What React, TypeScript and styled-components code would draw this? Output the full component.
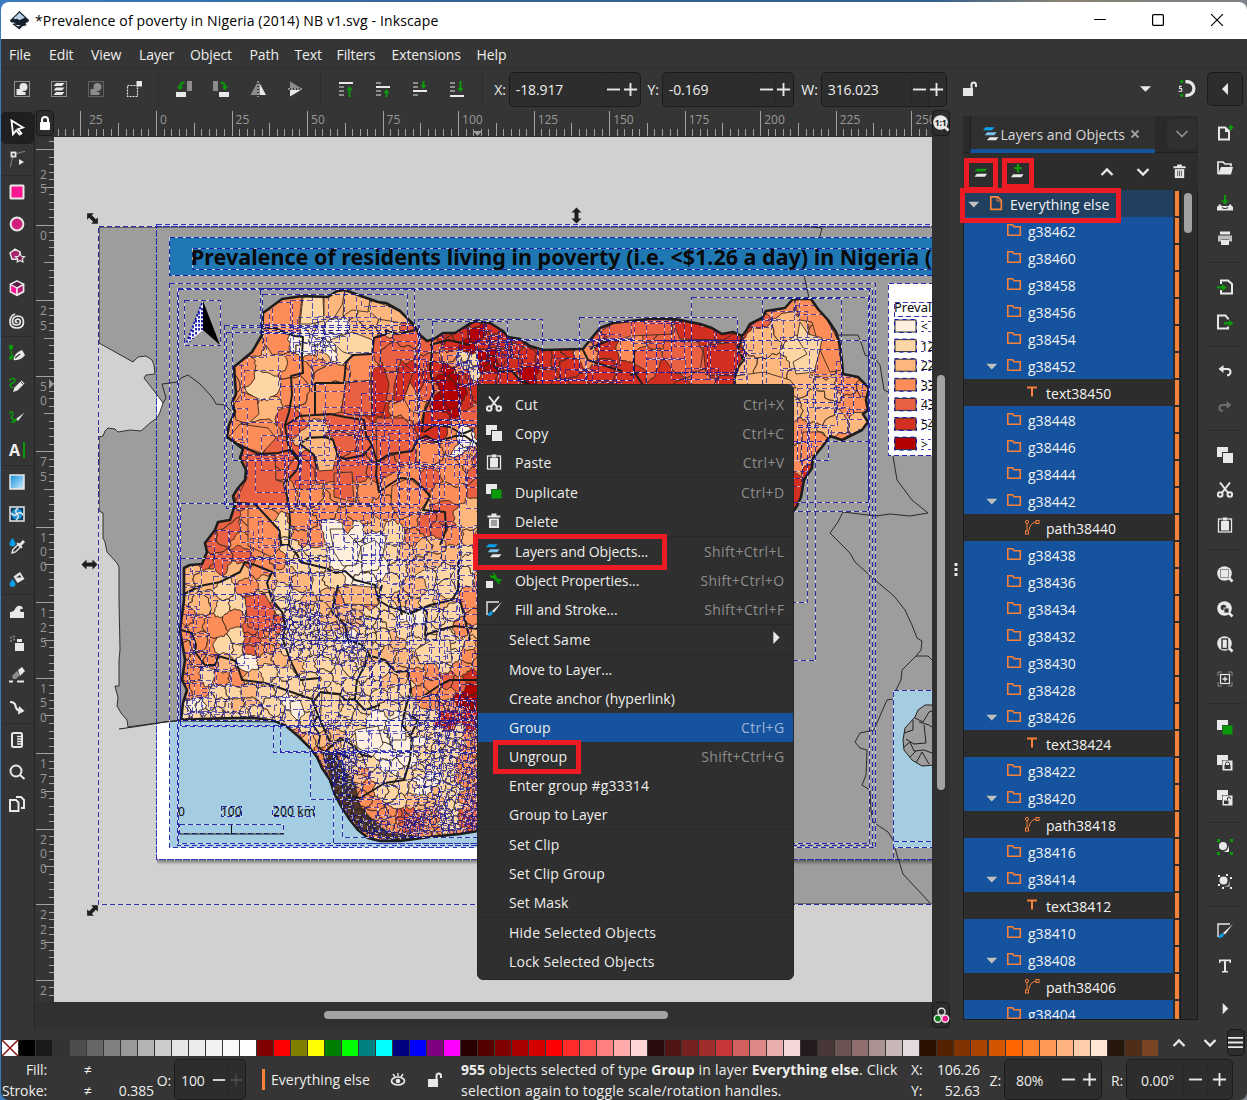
import React from 'react';
import styled, { createGlobalStyle, css } from 'styled-components';

const Global = createGlobalStyle`
  * { box-sizing: border-box; }
  body { margin: 0; width: 1247px; height: 1100px; overflow: hidden; background: #353535; }
`;

const W = '#e8e8e8';
const G = '#8c8c8c';
const GR = '#0a9a0a';
const OR = '#f5813a';
const BL = '#15539e';

const Window = styled.div`
  position: relative;
  width: 1247px;
  height: 1100px;
  overflow: hidden;
  display: flex;
  flex-direction: column;
  padding: 2px 0 0 1px;
  background: linear-gradient(90deg, #3a7cc0, #35618f 40%, #34608f 75%, #8a8272 85%, #7e8288);
  color: #eeeeec;
  font: 14px 'Open Sans', 'Noto Sans', sans-serif;
  letter-spacing: -0.1px;
  white-space: nowrap;
`;
const TitleBar = styled.div`
  height: 37px;
  flex: none;
  display: flex;
  align-items: center;
  background: #fff;
  color: #000;
  border-radius: 8px 8px 0 0;
  padding: 0 1px 0 9px;
`;
const Title = styled.span`
  flex: 1;
  margin-left: 6px;
  letter-spacing: 0.14px;
`;
const WinBtn = styled.span`
  width: 58.5px;
  display: flex;
  justify-content: center;
  padding-bottom: 1px;
`;
const MenuBar = styled.div`
  height: 29px;
  flex: none;
  display: flex;
  align-items: center;
  background: #353535;
  border-bottom: 1px solid #2d2d2d;
  padding: 3px 0 0 8px;
`;
const MenuName = styled.span<{ $w: number }>`
  width: ${p => p.$w}px;
`;
const ToolRow = styled.div`
  height: 42px;
  flex: none;
  display: flex;
  align-items: center;
  background: #353535;
  padding: 0 0 0 2.5px;
`;
const TopBtn = styled.span<{ $w?: number; $boxed?: boolean }>`
  width: ${p => p.$w ?? 37.2}px;
  height: 34px;
  flex: none;
  display: flex;
  align-items: center;
  justify-content: center;
  margin-bottom: 1px;
  ${p => p.$boxed && css`
    margin-right: 4px;
    background: #2d2d2d;
    border: 1px solid #1b1b1b;
    border-radius: 5px;
  `}
`;
const Spacer = styled.span`
  flex: 1;
`;
const VSep = styled.span`
  width: 1px;
  height: 34px;
  margin: 0 6px;
  background: #2d2d2d;
  flex: none;
`;
const SpinLabel = styled.span<{ $w: number }>`
  width: ${p => p.$w}px;
  text-align: right;
  padding: 1px 3px 0 0;
  flex: none;
`;
const SpinBox = styled.span<{ $w: number; $h?: number; $cell?: number; $pad?: number; $end?: number }>`
  width: ${p => p.$w}px;
  height: ${p => p.$h ?? 35}px;
  flex: none;
  display: flex;
  align-items: stretch;
  background: #2d2d2d;
  border: 1px solid #1b1b1b;
  border-radius: 5px;
  padding-right: ${p => p.$end ?? 1}px;
  & > b { flex: 1; font-weight: 400; padding: 1px 0 0 ${p => p.$pad ?? 6}px; align-self: center; }
  & > i { width: ${p => p.$cell ?? 17}px; display: flex; align-items: center; justify-content: center; border-left: 1px solid #292929; }
`;
const Main = styled.div`
  height: 919px;
  flex: none;
  display: flex;
  background: #353535;
`;
const LeftBar = styled.div`
  width: 34px;
  flex: none;
  padding-top: 1.5px;
  border-right: 1px solid #242424;
  margin-right: 1px;
`;
const ToolBtn = styled.div<{ $on?: boolean; $line?: boolean }>`
  height: 32.25px;
  display: flex;
  align-items: center;
  justify-content: center;
  padding-right: 1px;
  border-bottom: 1px solid ${p => (p.$line ? '#2b2b2b' : 'transparent')};
  ${p => p.$on && css`background: #1f1f1f; border-radius: 5px;`}
`;
const Frame = styled.div`
  width: 914px;
  flex: none;
  background: #303030;
`;
const FrameRow = styled.div<{ $h: number }>`
  height: ${p => p.$h}px;
  display: flex;
`;
const Corner = styled.div<{ $h?: number }>`
  width: 18px;
  height: ${p => p.$h ?? 26}px;
  flex: none;
  display: flex;
  align-items: center;
  justify-content: center;
  background: #2d2d2d;
  border: 1px solid #181818;
  border-radius: 5px;
`;
const VScroll = styled.div`
  width: 18px;
  padding: 238px 5px 0 5px;
`;
const Thumb = styled.div<{ $w: number; $h: number }>`
  width: ${p => p.$w}px;
  height: ${p => p.$h}px;
  border-radius: 5px;
  background: #a3a2a0;
`;
const HScroll = styled.div`
  width: 896px;
  padding: 9px 0 0 288px;
`;
const Splitter = styled.div`
  width: 13px;
  flex: none;
  display: flex;
  align-items: center;
  justify-content: center;
  padding-right: 1px;
`;
const Panel = styled.div`
  width: 235px;
  height: 904px;
  margin-top: 6px;
  flex: none;
  display: flex;
  flex-direction: column;
  background: #2d2d2d;
`;
const Tabs = styled.div`
  height: 37px;
  flex: none;
  display: flex;
  background: #2a2a2a;
  border-bottom: 1px solid #1f1f1f;
  padding-left: 7px;
`;
const Tab = styled.div`
  width: 185px;
  height: 37px;
  display: flex;
  align-items: center;
  gap: 2px;
  padding-left: 11.5px;
  background: #303030;
  border-left: 1px solid #1f1f1f;
  border-bottom: 4px solid ${BL};
  color: #d8d8d8;
  letter-spacing: 0.04px;
  padding-top: 3px;
`;
const TabMenu = styled.div`
  width: 30px;
  height: 30px;
  margin: 3px 0 0 12px;
  display: flex;
  align-items: center;
  justify-content: center;
  border-radius: 5px;
  background: #303030;
`;
const PanelTools = styled.div`
  height: 37px;
  flex: none;
  display: flex;
  align-items: center;
`;
const PBtn = styled.span<{ $w: number }>`
  width: ${p => p.$w}px;
  display: flex;
  justify-content: center;
`;
const ListArea = styled.div`
  flex: 1;
  min-height: 0;
  display: flex;
  border: 1px solid #1b1b1b;
  border-width: 0 1px 1px 1px;
`;
const List = styled.div`
  width: 217px;
  overflow: hidden;
  border-right: 1px solid #1b1b1b;
`;
const Row = styled.div<{ $kind: string }>`
  height: 27px;
  display: flex;
  align-items: center;
  color: #f4f4f4;
  letter-spacing: ${p => (p.$kind === 'root' ? 0.08 : 0.02)}px;
  & > div {
    width: 209px;
    height: 27px;
    display: flex;
    align-items: center;
    background: ${p => (p.$kind === 'root' ? '#21405f' : p.$kind === 'g' ? BL : '#2d2d2d')};
  }
  & > u { width: 4px; height: 25px; margin-left: 2px; background: ${OR}; }
`;
const Slot = styled.span<{ $w: number; $lift?: number }>`
  width: ${p => p.$w}px;
  display: flex;
  justify-content: flex-end;
  padding-bottom: ${p => p.$lift ?? 2}px;
  flex: none;
`;
const RowName = styled.span<{ $gap: number }>`
  margin-left: ${p => p.$gap}px;
  padding-top: 1px;
`;
const ListScroll = styled.div`
  padding: 3px 0 0 3px;
`;
const RightBar = styled.div`
  width: 48px;
  flex: none;
  padding: 5.4px 0 0 6px;
`;
const CmdBtn = styled.div<{ $h?: number }>`
  height: ${p => p.$h ?? 35}px;
  display: flex;
  align-items: center;
  justify-content: center;
`;
const CmdSep = styled.div`
  height: 1px;
  margin: 6.5px 2px;
  background: #2c2c2c;
`;
const PaletteRow = styled.div`
  height: 27px;
  flex: none;
  display: flex;
  align-items: flex-end;
  background: #353535;
  padding-left: 0.6px;
`;
const Swatch = styled.span<{ $c: string }>`
  width: 16px;
  height: 16px;
  margin-right: 1.02px;
  background: ${p => p.$c};
  flex: none;
`;
const NavBtn = styled.span<{ $w: number }>`
  width: ${p => p.$w}px;
  height: 27px;
  display: flex;
  align-items: center;
  justify-content: center;
`;
const Status = styled.div`
  height: 44px;
  flex: none;
  display: flex;
  align-items: center;
  background: #353535;
  padding-top: 3px;
  border-radius: 0 0 8px 8px;
`;
const Stack = styled.div<{ $w: number; $right?: boolean; $gap?: number; $ls?: number }>`
  width: ${p => p.$w}px;
  flex: none;
  display: flex;
  flex-direction: column;
  line-height: 21px;
  text-align: ${p => (p.$right ? 'right' : 'left')};
  padding-left: ${p => p.$gap ?? 0}px;
  letter-spacing: ${p => p.$ls ?? -0.1}px;
  & b { font-weight: 700; letter-spacing: 0.05px; }
`;
const LayerMark = styled.span`
  width: 3px;
  height: 21px;
  margin: 0 6px 0 16px;
  background: ${OR};
  flex: none;
`;
const LayerName = styled.span`
  width: 100px;
  flex: none;
  letter-spacing: 0.05px;
`;
const Cell = styled.span<{ $w: number }>`
  width: ${p => p.$w}px;
  flex: none;
  display: flex;
  justify-content: center;
`;

const Popup = styled.div`
  position: absolute;
  left: 477px;
  top: 384px;
  width: 317px;
  height: 596px;
  padding: 5px 0;
  background: #2f2f2f;
  border: 1px solid #262626;
  border-radius: 0 6px 6px 6px;
`;
const Item = styled.div<{ $on?: boolean; $icon?: boolean; $line?: boolean; $ls: number }>`
  height: ${p => (p.$line ? 30 : 29)}px;
  display: flex;
  align-items: center;
  padding: 0 8.5px 1px ${p => (p.$icon ? 8 : 31)}px;
  background: ${p => (p.$on ? BL : 'transparent')};
  border-bottom: ${p => (p.$line ? '1px solid #282828' : 'none')};
  letter-spacing: ${p => p.$ls}px;
  & > svg { margin-right: 13px; }
  & > em { margin-left: auto; font-style: normal; letter-spacing: 0.38px; color: ${p => (p.$on ? '#9db6d6' : '#8e8e8c')}; }
`;
const Mark = styled.div<{ $x: number; $y: number; $w: number; $h: number }>`
  position: absolute;
  left: ${p => p.$x}px;
  top: ${p => p.$y}px;
  width: ${p => p.$w}px;
  height: ${p => p.$h}px;
  border: 5px solid #ed1c24;
`;

/* ---------- icons ---------- */
const LensText = styled.text`
  font: 700 8.5px 'Open Sans', sans-serif;
  letter-spacing: -0.2px;
  fill: #1a1a1a;
`;
const dots = (c: string) => <rect x=".5" y=".5" width="15" height="15" fill="none" stroke={c} strokeDasharray="1 1" />;
const lens = <><circle cx="7.5" cy="7.5" r="7.3" fill={W} /><path d="M12 12l3.5 3.5" stroke={W} strokeWidth="2.6" /></>;
const copyBack = <path d="M0 0h11v5H5v5H0z" fill={W} />;
const scissors = <g fill="none" stroke={W} strokeWidth="2"><circle cx="3.2" cy="12.5" r="2.3" /><circle cx="12.8" cy="12.5" r="2.3" /><path d="M3 .5l7.8 10M13 .5L5.2 10.5" /></g>;
const para = (x: number, y: number, w: number, c: string) => <path d={`M${x + 2.5} ${y}h${w - 2.5}l-2.5 3.1h-${w - 2.5}z`} fill={c} />;
const arrowUp = (x: number, y: number, h: number) => <path d={`M${x} ${y}l-3 4h2v${h - 4}h2v-${h - 4}h2z`} fill={GR} />;
const arrowDn = (x: number, y: number, h: number) => <path d={`M${x} ${y + h}l-3-4h2v-${h - 4}h2v${h - 4}h2z`} fill={GR} />;
const lines = (ys: number[]) => ys.map(y => <rect key={y} x="1" y={y} width="5" height="2" fill={G} />);

const ICONS: Record<string, React.ReactNode> = {
  selAll: <>{dots(W)}<circle cx="9.5" cy="6" r="4" fill={W} /><path d="M2.5 8h4l3 3h2v3h-9z" fill={W} /></>,
  selLayers: <>{dots(W)}{para(2.5, 2, 11, W)}{para(2.5, 6.5, 11, W)}{para(2.5, 11, 11, W)}</>,
  desel: <>{dots(G)}<circle cx="9.5" cy="6" r="4" fill={G} /><path d="M2.5 8h4l3 3h2v3h-9z" fill={G} /></>,
  resize: <><rect x="1.5" y="4.5" width="10" height="11" fill="none" stroke={W} strokeWidth="1.2" strokeDasharray="2 1" /><rect x="10.5" y="0" width="5.5" height="5.5" fill={W} /></>,
  rotL: <><rect x="11" y="0" width="5" height="10" fill={G} /><rect x="0" y="11" width="10" height="5" fill={W} /><path d="M8.5 1.5C5 1.5 4 3 4 6" fill="none" stroke={GR} strokeWidth="2" /><path d="M.8 5.5h6.4L4 9.3z" fill={GR} /></>,
  rotR: <><rect x="0" y="0" width="5" height="10" fill={G} /><rect x="6" y="11" width="10" height="5" fill={W} /><path d="M7.5 1.5C11 1.5 12 3 12 6" fill="none" stroke={GR} strokeWidth="2" /><path d="M8.8 5.5h6.4L12 9.3z" fill={GR} /></>,
  flipH: <><path d="M7 2v12H.5z" fill={G} /><path d="M9.500 2v12H16z" fill={W} /><path d="M8 0v16" stroke={W} strokeDasharray="2 1" /></>,
  flipV: <><path d="M3 7V.5L14 7z" fill={G} /><path d="M3 9v6.5L14 9z" fill={W} /><path d="M1 8h15" stroke={W} strokeDasharray="2 1" /></>,
  top: <><rect x="1" y="1" width="14" height="2" fill={W} />{lines([5, 9, 13])}{arrowUp(11.5, 5, 11)}</>,
  raise: <>{lines([1, 9, 13])}<rect x="1" y="5" width="14" height="2" fill={W} />{arrowUp(11.5, 8, 8)}</>,
  lower: <>{lines([1, 5, 13])}<rect x="1" y="9" width="14" height="2" fill={W} />{arrowDn(11.5, 0, 8)}</>,
  bottom: <>{lines([1, 5, 9])}<rect x="1" y="14" width="14" height="2" fill={W} />{arrowDn(11.5, 0, 11)}</>,
  unlock: <><rect x="1" y="7" width="10" height="8" fill={W} /><path d="M9.5 7V4q0-2.5 2.2-2.5T14 4v2" fill="none" stroke={W} strokeWidth="2" /></>,
  lock: <><rect x="3" y="7" width="10" height="8" rx="1" fill="#fff" /><path d="M5 8V5q0-3 3-3t3 3v3" fill="none" stroke="#fff" strokeWidth="2" /></>,
  down: <path d="M2 5.500h12l-6 6z" fill={W} />,
  snap: <><path d="M7 1.5h1.500a6.500 6.500 0 0 1 0 13H7" fill="none" stroke={W} strokeWidth="3" /><circle cx="3.500" cy="1.500" r="1.600" fill={GR} /><circle cx="3.500" cy="14.500" r="1.600" fill={GR} /><path d="M3.500 6H1.500v2h2v2.500H.5" fill="none" stroke={W} /></>,
  left: <path d="M11 2v12L5 8z" fill={W} />,
  right: <path d="M5 2v12l6-6z" fill={W} />,
  cursor: <path d="M2.5 1.5l11.5 7-5 1.6 3.4 4.2-1.8 1.3-3.4-4.2-3.2 3.8z" fill="none" stroke="#fff" strokeWidth="1.800" />,
  node: <><path d="M4 6q-2 4-2.500 10M7 3q4-2 9-2.500" fill="none" stroke={G} /><rect x="2.500" y="1.500" width="4" height="4" fill="#353535" stroke={W} strokeWidth="1.800" /><path d="M10 8l5 3-5 3z" fill={W} /></>,
  rect: <rect x="1.5" y="1.5" width="13" height="13" rx=".5" fill="#ff1493" stroke={W} strokeWidth="2" />,
  ellipse: <circle cx="8" cy="8" r="6.4" fill="#d0207c" stroke={W} strokeWidth="2" />,
  star: <><path d="M6 1.2l5.2 3-1.2 7H3L1 5z" fill="#a8246c" stroke={W} strokeWidth="1.500" /><path d="M11 5.500l1.400 2.800 3.100.3-2.200 2.200.7 3.200-3-1.500-2.800 1.500.5-3.200-2.200-2.200 3.100-.3z" fill="#7c1a50" stroke={W} strokeWidth="1.200" /></>,
  cube: <><path d="M8 .8l6.500 3.500v7.500L8 15.400 1.500 11.800V4.300z" fill="#5a1a40" stroke={W} strokeWidth="1.500" /><path d="M1.500 4.500L8 8v7L1.500 11.800z" fill="#ff1493" stroke={W} strokeWidth="1.300" /><path d="M14.500 4.500L8 8v7l6.500-3.500z" fill="#b81a70" stroke={W} strokeWidth="1.500" /></>,
  spiral: <path d="M8.500 9Q7 10 6.500 8.500T8.500 6Q11.500 6 11.300 9T7.500 12Q3.500 12 3.500 8T8.500 3Q14.500 3 14.500 9T8 15Q1 15 1 8.500 1 3 6 1" fill="none" stroke={W} strokeWidth="1.700" />,
  pen: <><path d="M2 2q-1 9 5 12" fill="none" stroke={GR} strokeWidth="1.300" /><rect x="0" y="0" width="4" height="4" fill={GR} /><rect x="0" y="11" width="3.500" height="3.500" fill={GR} /><path d="M4.500 15Q5 8 13 5l3 5q-4 6-11.500 5z" fill={W} /><path d="M6 13l5-4" stroke="#353535" strokeWidth="1.300" /></>,
  pencil: <><path d="M1 4Q1 1 4 1.500T6 4 2 7t2 4" fill="none" stroke={GR} strokeWidth="1.500" /><path d="M4 15l1.500-4.500 7-7 3 3-7 7z" fill={W} /><path d="M11.500 4.500l3 3" stroke="#353535" /></>,
  brush: <><path d="M1 5Q1 2 3 3T3 7 5 10" fill="none" stroke={GR} strokeWidth="1.500" /><path d="M15.500 3.500L9 12l-2-2z" fill={W} /><path d="M8 10.500Q7 14.500 1 14q2-1 3-3t4-.5z" fill={GR} /></>,
  gradient: <rect x="1" y="1" width="14" height="14" fill="url(#gradBlue)" stroke={W} strokeWidth="1.500" />,
  mesh: <><rect x="1" y="1" width="14" height="14" fill="#0d3c5c" stroke={W} strokeWidth="1.500" /><circle cx="8" cy="8" r="5.500" fill="#1d93d8" /><path d="M8 8Q5 5 9 2M8 8q3-3 6 1M8 8q3 3-1 6M8 8Q5 11 2 7" fill="none" stroke={W} strokeWidth="1.500" /></>,
  dropper: <><path d="M3.500 0q3 4 3 5.500a2.800 2.800 0 0 1-6 0Q.5 4 3.500 0z" fill="#0d9be6" /><path d="M3 15l1-3.500 5-5 2.500 2.500-5 5z" fill="none" stroke={W} strokeWidth="1.400" /><path d="M8.500 4.500l2 1L14 2l2 2-3.500 3.500 1 2-1 1-5-5z" fill={W} /></>,
  bucket: <><path d="M4.500 5.500L11 1l4.500 7L8.500 12z" fill={W} /><path d="M7 6.500l4-2.500 1.500 2.500z" fill="#353535" /><path d="M3.500 8q3 3.500 3 5a2.800 2.800 0 0 1-6 0Q.5 12 3.500 8z" fill="#0d9be6" /></>,
  tweak: <path d="M1 15V9q4 0 5-3 2-4 6-3 2 1 2 3-3-1-3 2 0 1 4 1v6z" fill={W} />,
  spray: <><rect x="6" y="8" width="9" height="8" fill={W} /><path d="M8 7V4h5v3z" fill={W} /><g fill={G}><circle cx="2" cy="2.500" r="1" /><circle cx="5" cy="1.500" r="1" /><circle cx="2" cy="6" r="1" /><circle cx="5" cy="4.500" r="1" /></g></>,
  eraser: <><path d="M9 3l4-3 3 4-5 5z" fill={W} /><path d="M3 9l5-5 3 4-4 4H4z" fill={G} /><path d="M0 14.500h4M8 14.500h7" stroke={W} strokeWidth="2" /></>,
  connector: <><path d="M1 2q5 0 5.500 4T12 11" fill="none" stroke={W} strokeWidth="2.200" /><path d="M10 6l5.500 5-6.500 3.500z" fill={W} /></>,
  measure: <><rect x="3" y="1" width="10" height="14" rx="1.500" fill="none" stroke={W} strokeWidth="2" /><path d="M8 4.500h4M8 7h4M8 9.500h4M8 12h4" stroke={W} strokeWidth="1.300" /></>,
  zoom: <><circle cx="7" cy="7" r="5.500" fill="none" stroke={W} strokeWidth="2" /><path d="M11 11l4.500 4" stroke={W} strokeWidth="2" /></>,
  pages: <><path d="M1 4h6l2.500 2.500V15H1z" fill="none" stroke={W} strokeWidth="2" /><path d="M7 1h5l3 3v8h-3" fill="none" stroke={W} strokeWidth="2" /></>,
  newDoc: <><path d="M2 2.500h6L12 6v8.500H2z" fill="none" stroke={W} strokeWidth="2" /><path d="M8 2v5h4z" fill={W} /><path d="M14 0v5M11.500 2.500h5" stroke={GR} strokeWidth="2" /></>,
  open: <><path d="M1 14V2h5l2 2h6v2.500" fill="none" stroke={W} strokeWidth="1.700" /><path d="M4 7h12l-2 7.500H1z" fill={W} /></>,
  save: <><path d="M3 9L0 12v3.500h16V12l-3-3-1.500 2h-7z" fill={W} /><path d="M5 12.500q3 2 6 0" fill="none" stroke="#353535" strokeWidth="1.200" /><path d="M8 9.500L4 5.500h3V0h2v5.500h3z" fill={GR} /></>,
  print: <><rect x="3" y="1.500" width="10" height="3" fill={W} /><path d="M1 5.500h14v6h-3V9.500H4v2H1z" fill="#c0c0c0" /><rect x="4" y="10" width="8" height="5" fill={W} /></>,
  imp: <><path d="M4 5V1.500h7L15 5v9.500H4V11" fill="none" stroke={W} strokeWidth="2" /><path d="M0 7.200h5V5l5 3.500L5 12V9.500H0z" fill={GR} /></>,
  exp: <><path d="M11 5.500V4.500L8.500 1.500H1v13h10v-2" fill="none" stroke={W} strokeWidth="2" /><path d="M7 8h5V6l4.500 3.300L12 12.500v-2H7z" fill={GR} /></>,
  undo: <><path d="M5 6h5.500q3 0 3 3T10 12.500" fill="none" stroke={W} strokeWidth="2" /><path d="M1.500 6L6.500 2v8z" fill={W} /></>,
  redo: <><path d="M11 7H6q-3.500 0-3.500 3T6 13" fill="none" stroke="#6e6e6e" strokeWidth="2" /><path d="M14.500 7L9.500 3v8z" fill="#6e6e6e" /></>,
  copy: <>{copyBack}<rect x="6" y="6" width="10" height="10" fill={W} /></>,
  dup: <>{copyBack}<rect x="5.500" y="5.500" width="10" height="9" fill={GR} /></>,
  cut: scissors,
  paste: <><rect x="1.500" y="2" width="13" height="13" fill="none" stroke={W} strokeWidth="1.300" /><rect x="5" y="0" width="6" height="4" fill="#353535" /><rect x="4" y="4" width="8" height="9.500" fill={W} /><rect x="5.500" y=".5" width="5" height="3" fill={W} /></>,
  zSel: <>{lens}<rect x="3.500" y="3.500" width="8" height="8" fill="none" stroke="#353535" strokeDasharray="1 1" /></>,
  zDraw: <>{lens}<circle cx="6.500" cy="6.500" r="2.800" fill="#353535" /><rect x="7" y="7" width="5" height="5" fill="#353535" stroke={W} strokeWidth=".8" /></>,
  zPage: <>{lens}<rect x="5" y="3" width="5.500" height="9.500" fill="none" stroke="#353535" strokeWidth="1.400" /></>,
  zOne: <>{lens}<LensText x="1.800" y="10.600">1:1</LensText></>,
  zCenter: <><path d="M1 5V1h4M11 1h4v4M15 11v4h-4M5 15H1v-4" fill="none" stroke={G} /><rect x="3.500" y="3.500" width="9" height="9" fill="none" stroke={W} strokeWidth="1.200" /><path d="M8 5.500v5M5.500 8h5" stroke={W} strokeWidth="1.300" /></>,
  clone: <>{copyBack}<rect x="5.500" y="5.500" width="10" height="10" fill={W} /><rect x="7.500" y="10" width="6" height="4" fill="#353535" /><path d="M8.500 10V8.500q0-1.500 2-1.500t2 1.500V10" fill="none" stroke="#353535" /></>,
  unlink: <>{copyBack}<rect x="5.500" y="5.500" width="10" height="10" fill={W} /><rect x="7" y="10.500" width="4.500" height="3.500" fill="#353535" /><path d="M10.500 10V8q0-1 1.500-1t1.500 2" fill="none" stroke="#353535" /></>,
  group: <><g fill={GR}><rect width="3" height="3" /><rect x="13" width="3" height="3" /><rect y="13" width="3" height="3" /><rect x="13" y="13" width="3" height="3" /></g><circle cx="6" cy="7" r="4" fill={W} /><path d="M12 6v7H6q5-1 6-7z" fill={W} /></>,
  ungroup: <><g fill={W}><rect x="1" y="1" width="2" height="2" /><rect x="9" y="0" width="2" height="2" /><rect x="13" y="3" width="2" height="2" /><rect x="1" y="10" width="2" height="2" /><rect x="5" y="13" width="2" height="2" /><rect x="13" y="13" width="2" height="2" /></g><circle cx="6.500" cy="6.500" r="4" fill={W} /><path d="M13 6v7H6q6-1 7-7z" fill={G} /></>,
  fill: <><path d="M1 14V1h12" fill="none" stroke={W} strokeWidth="1.400" /><path d="M16 1L8 11.500 6 10z" fill={W} /><path d="M7 11q0 3.500-5.500 4.500 0-4 4-5.500z" fill="#0d9be6" /></>,
  text: <path d="M2 1.500h12v3.500h-1.200l-.5-1.700H9v9.700h2V14.500H5V13h2V3.300H3.700L3.200 5H2z" fill={W} />,
  trash: <><path d="M1.500 2.500h13v2h-13zM5.500.5h5v2h-5z" fill={W} /><path d="M3 5.500h10V15H3z" fill={W} /><path d="M6 7v6M8 7v6M10 7v6" stroke="#555" /></>,
  layers: <>{para(0, 1.2, 11.500, '#0da2f0')}{para(1.700, 6.200, 12, '#7cc4ec')}{para(4, 11.200, 11.500, W)}</>,
  props: <><rect x="0" y="9" width="7" height="7" fill={W} /><path d="M5 1q4-1 5 3l2 3q3-1 4 2l-2 0-1 2 2 1q-3 1-4-2l-4-4Q3 6 4 3l3 1 1-2z" fill={GR} /></>,
  addLayer: <>{para(0.5, 5, 13.500, GR)}{para(0.5, 10.500, 13.500, W)}</>,
  plusLayer: <><path d="M8.500 0v9M4.500 4.500h8" stroke={GR} strokeWidth="2.400" />{para(1, 11, 13.500, W)}</>,
  up: <path d="M2.500 11L8 5.500l5.500 5.500" fill="none" stroke={W} strokeWidth="2.300" />,
  chev: <path d="M2.500 5L8 10.500 13.500 5" fill="none" stroke={W} strokeWidth="2.300" />,
  chevDim: <path d="M2.500 5L8 10.500 13.500 5" fill="none" stroke="#929292" strokeWidth="1.700" />,
  close: <path d="M4.500 4.500l7 7M11.500 4.500l-7 7" stroke="#a0a0a0" strokeWidth="1.800" />,
  folder: <path d="M1.800 2.800h4.700l1.500 2h6.300v8.400H1.800z" fill="none" stroke={OR} strokeWidth="1.600" />,
  file: <><path d="M2.800 1.800h7l3.500 3.500v9H2.800z" fill="none" stroke={OR} strokeWidth="1.700" /><path d="M9 2v4h4" fill="none" stroke={OR} /></>,
  tObj: <path d="M3 3.500h10M8 3.500v9" stroke={OR} strokeWidth="2" />,
  pObj: <g fill="none" stroke={OR}><path d="M3 5v7M5 11q1-7 7-8" /><circle cx="3" cy="3" r="1.600" /><rect x="1.500" y="12" width="3" height="3" /><rect x="12" y="1.500" width="3" height="3" /></g>,
  tri: <path d="M1.500 5.500h12.500L7.750 12z" fill="#c0c0c0" />,
  minus: <path d="M1 8h14" stroke={W} strokeWidth="2" />,
  plus: <path d="M1 8h14M8 1v14" stroke={W} strokeWidth="2" />,
  plusDim: <path d="M1.500 8h13M8 1.500v13" stroke="#555" strokeWidth="1.500" />,
  burger: <path d="M0 3h16M0 8h16M0 13h16" stroke={W} strokeWidth="1.900" />,
  eye: <><ellipse cx="8" cy="9" rx="6.500" ry="4" fill="none" stroke={W} strokeWidth="1.700" /><circle cx="8" cy="9" r="2.300" fill={W} /><path d="M3 2l2 3M8 1v3M13 2l-2 3" stroke={W} strokeWidth="1.400" /></>,
  cms: <g strokeWidth="1.300" stroke={W}><circle cx="8" cy="4.500" r="3.300" fill="none" /><circle cx="4.500" cy="11" r="3.300" fill="#0a7a1a" /><circle cx="11.500" cy="11" r="3.300" fill="#f0148c" /></g>,
  ink: <><path d="M8 0l8 7.500q0 2-3 2.500l1 2-4 1-2 2.500L6 14l-4-3 3-1-4-.5q-2-1 0-2.500z" fill="#16202c" /><path d="M8 1.500l4.500 4.200-2.500 1-2 1-2-1.200-2 .5-1-.8z" fill="#b9d2ea" /><path d="M4 11.500l5 .5-2 1z" fill="#dce8f4" /></>,
};
const Glyph = styled.svg`
  flex: none;
  overflow: visible;
`;
const Ico = ({ n, s = 16 }: { n: string; s?: number }) => <Glyph width={s} height={s} viewBox="0 0 16 16">{ICONS[n]}</Glyph>;

/* ---------- map ---------- */
type P = [number, number];
const OUTLINE: P[] = [[263, 313], [282, 299], [302, 296], [328, 297], [337, 291], [345, 290], [358, 295], [378, 302], [386, 303], [400, 311], [413, 324], [420, 335], [427, 341], [434, 339], [443, 333], [455, 333], [466, 326], [475, 321], [490, 323], [503, 331], [508, 337], [520, 339], [530, 346], [543, 350], [583, 349], [590, 340], [600, 328], [613, 323], [630, 321], [650, 319], [675, 319], [690, 322], [700, 324], [712, 328], [722, 334], [733, 332], [742, 336], [746, 331], [750, 324], [762, 318], [766, 311], [785, 308], [793, 299], [811, 299], [818, 309], [828, 320], [836, 332], [840, 345], [842, 362], [843, 374], [858, 377], [869, 388], [866, 400], [868, 410], [863, 414], [868, 422], [862, 430], [842, 440], [830, 436], [822, 447], [813, 458], [812, 468], [804, 480], [801, 497], [797, 506], [760, 560], [700, 600], [640, 700], [560, 800], [478, 831], [460, 834], [430, 837], [400, 841], [380, 841], [368, 838], [358, 830], [350, 820], [341, 806], [335, 795], [330, 780], [322, 768], [317, 757], [310, 748], [298, 736], [286, 726], [275, 721], [255, 718], [235, 718], [200, 719], [181, 720], [183, 703], [187, 690], [182, 680], [185, 660], [180, 630], [184, 600], [184, 568], [190, 565], [202, 564], [207, 552], [205, 543], [215, 530], [218, 522], [230, 520], [235, 505], [233, 496], [238, 488], [245, 480], [246, 470], [240, 458], [243, 449], [227, 437], [229, 425], [235, 412], [232, 403], [236, 394], [234, 367], [252, 352], [262, 335]];
// one digit per 20px square, starting at (180, 290); digits index into RAMP
const MID = '4444444444444';
const SHADES = [
  '....331222222555555544444555' + '4333333',
  '....33112222255555554444555544' + '33333',
  '...33300124445655555443445554221333',
  '..332132334443165555355444553211333',
  '..321333454556555655555454442222233',
  '..3323334543465' + '5555555555555' + '2222233',
  '..3324444444554' + '5555555555555' + '2222222',
  '..3334224444430' + MID + '3332222',
  '...443424444333' + MID + '3333333',
  '..4444344433433' + MID + '3555555',
  '...443333332334' + MID + '4455555',
  '.44343333233442',
  '.44331300013232',
  '444431100012221',
  '222322110012113',
  '221421223312123',
  '333441122110113',
  '331431110121112',
  '332022111222213',
  '313211111123345',
  '011210111111336',
  '111111111001155',
  '......221000113',
  '......131100113',
  '......332311013',
  '......333312213',
  '......333334314',
  '......333333333',
];
const RAMP = ['#fef0dc', '#fdd6a5', '#fdb77d', '#fc8d59', '#ea6043', '#d33022', '#b30000'];
// large districts drawn over the fine mesh: [ramp index, outline]
const LARGE: [number, string][] = [
  [3, 'M263 313L282 299 302 297 299 322 301 334 286 333 275 328 263 328Z'],
  [1, 'M303 297L323 297 324 321 310 324 300 324Z'],
  [2, 'M324 297L337 291 345 290 342 305 334 318 324 320Z'],
  [2, 'M345 290L370 299 368 312 352 310 343 316Z'],
  [2, 'M372 300L400 311 414 324 396 322 378 319 368 310Z'],
  [1, 'M330 340L352 332 373 340 373 353 354 355 343 352Z'],
  [3, 'M315 383L346 383 341 412 328 415 315 415Z'],
  [4, 'M346 383L371 380 372 416 352 415 341 412Z'],
  [5, 'M371 372L382 362 389 384 386 402 382 417 372 415Z'],
  [5, 'M394 386L401 360 413 372 404 399 394 404Z'],
  [3, 'M404 399L410 382 417 393 418 414 410 410Z'],
  [2, 'M299 443L311 437 332 437 337 452 333 470 319 471 315 455Z'],
  [4, 'M246 455L275 455 276 480 286 483 287 505 255 504 235 502 247 478Z'],
  [3, 'M248 506L256 506 268 518 280 530 282 545 272 557 248 546Z'],
  [3, 'M228 438L240 424 268 428 276 438 262 453 240 446Z'],
  [3, 'M234 404L243 392 257 398 259 414 248 424 236 420Z'],
  [0, 'M330 529L343 529 361 547 356 565 343 566 334 552Z'],
  [0, 'M361 546L375 540 384 550 378 570 362 572Z'],
  [6, 'M437 380L454 380 462 404 450 411 441 397Z'],
  [4, 'M376 418L404 418 418 434 412 451 392 455 377 462Z'],
  [3, 'M392 486L408 478 424 490 430 497 420 511 400 520 391 505Z'],
  [4, 'M334 473L352 472 354 502 334 497Z'],
  [4, 'M245 597L264 593 275 612 270 632 248 627Z'],
  [0, 'M290 702L300 700 305 714 297 720 291 714Z'],
  [0, 'M355 730L378 726 383 744 372 757 357 747Z'],
  [0, 'M385 722L405 714 406 740 390 740Z'],
  [1, 'M415 650L432 640 450 640 452 662 420 664Z'],
  [2, 'M338 588L350 585 380 588 378 605 345 604Z'],
  [1, 'M322 693L340 695 338 722 320 727Z'],
  [4, 'M600 332L613 323 650 319 672 320 673 334 630 336 614 342Z'],
  [5, 'M672 320L700 324 735 333 724 340 680 339Z'],
  [4, 'M664 341L698 342 703 352 700 371 676 374 662 356Z'],
  [5, 'M703 346L734 342 742 357 736 376 706 375Z'],
  [3, 'M794 300L811 299 827 320 838 340 842 370 830 372 820 350 812 322 800 320Z'],
  [1, 'M800 322L808 334 822 338 820 350 814 372 796 374 793 362 807 354 797 338Z'],
  [2, 'M735 376L764 372 790 380 796 388 736 388Z'],
  [3, 'M803 432L820 432 830 440 814 455 800 462Z'],
];

let seed = 90217;
const rnd = () => {
  seed = (seed * 1664525 + 1013904223) % 4294967296;
  return seed / 4294967296;
};
const near = (x: number, y: number, cx: number, cy: number, r: number) => (x - cx) ** 2 + (y - cy) ** 2 < r * r;
const spacing = (x: number, y: number) => {
  if (near(x, y, 340, 768, 22)) return 4.2;
  if (near(x, y, 318, 338, 18) || near(x, y, 470, 450, 10) || near(x, y, 462, 368, 12) || near(x, y, 498, 350, 20)) return 7;
  if (y > 812) return 5.2;
  if (y > 700 && x > 420) return 6.5;
  if (near(x, y, 300, 630, 26) || near(x, y, 355, 640, 26) || near(x, y, 262, 635, 16)) return 7;
  if (y > 703 && x < 260) return 7;
  if (x > 580) return 27;
  if (x > 430 && y < 400) return 15;
  if (y > 600) return 14;
  if (y > 530) return 18;
  return 25;
};
const shadeAt = (x: number, y: number) => {
  const r = SHADES[Math.max(0, Math.min(27, Math.floor((y - 290) / 20)))];
  const c = r[Math.max(0, Math.floor((x - 180) / 20))];
  return c === undefined || c === '.' ? 3 : +c;
};
const hash = (a: number, b: number) => {
  const v = Math.sin(a * 12.9898 + b * 78.233) * 43758.5453;
  return v - Math.floor(v);
};
const jag = (a: P, b: P): string => {
  const flip = a[0] > b[0] || (a[0] === b[0] && a[1] > b[1]);
  const [p, q] = flip ? [b, a] : [a, b];
  const dx = q[0] - p[0], dy = q[1] - p[1];
  const len = Math.hypot(dx, dy);
  if (len < 3) return `L${b[0]} ${b[1]}`;
  const bow = (hash(Math.round(p[0] * 3), Math.round(q[1] * 3)) - 0.5) * 0.5;
  const pts = [0.17, 0.34, 0.5, 0.66, 0.83].map((t, i) => {
    const o = bow * Math.sin(t * Math.PI) + (hash(Math.round(p[0] + q[1]) + i * 7, Math.round(p[1] + q[0])) - 0.5) * 0.2;
    return [p[0] + dx * t - dy * o, p[1] + dy * t + dx * o];
  });
  if (flip) pts.reverse();
  return pts.map(v => `L${v[0].toFixed(1)} ${v[1].toFixed(1)}`).join('') + `L${b[0]} ${b[1]}`;
};

const buildDistricts = () => {
  const pts: P[] = [];
  for (let k = 0; k < 26000; k++) {
    const east = k % 5 === 0;
    const x = east ? 480 + rnd() * 395 : 178 + rnd() * 312;
    const y = east ? 288 + rnd() * 225 : 286 + rnd() * 560;
    if (x > 495 && x < 780 && y > 410) continue;
    const s = spacing(x, y) * (0.68 + hash(Math.floor(x / 40), Math.floor(y / 40)) * 0.3);
    if (pts.every(p => (p[0] - x) ** 2 + (p[1] - y) ** 2 > s * s)) pts.push([x, y]);
  }
  const byShade: string[] = RAMP.map(() => '');
  let boxes = '';
  pts.forEach((p, i) => {
    let poly: P[] = [[p[0] - 40, p[1] - 40], [p[0] + 40, p[1] - 40], [p[0] + 40, p[1] + 40], [p[0] - 40, p[1] + 40]];
    pts.forEach((q, j) => {
      if (i === j || Math.abs(q[0] - p[0]) > 75 || Math.abs(q[1] - p[1]) > 75) return;
      const mx = (p[0] + q[0]) / 2, my = (p[1] + q[1]) / 2, nx = q[0] - p[0], ny = q[1] - p[1];
      const side = (v: P) => (v[0] - mx) * nx + (v[1] - my) * ny;
      const out: P[] = [];
      poly.forEach((a, m) => {
        const b = poly[(m + 1) % poly.length];
        const sa = side(a), sb = side(b);
        if (sa <= 0) out.push(a);
        if (sa * sb < 0) {
          const t = sa / (sa - sb);
          out.push([a[0] + (b[0] - a[0]) * t, a[1] + (b[1] - a[1]) * t]);
        }
      });
      poly = out;
    });
    if (poly.length < 3) return;
    const r = poly.map(v => [Math.round(v[0] * 10) / 10, Math.round(v[1] * 10) / 10] as P);
    const shade = shadeAt(p[0] + (rnd() - 0.5) * 5, p[1] + (rnd() - 0.5) * 5);
    byShade[shade] += `M${r[0][0]} ${r[0][1]}` + r.map((v, m) => jag(v, r[(m + 1) % r.length])).join('') + 'Z';
    const xs = r.map(v => v[0]), ys = r.map(v => v[1]);
    const s = spacing(p[0], p[1]);
    if (rnd() < (s > 14 ? 0.8 : s > 8 ? 0.65 : 0.8)) {
      const x0 = Math.floor(Math.min(...xs)), x1 = Math.ceil(Math.max(...xs)), y0 = Math.floor(Math.min(...ys)), y1 = Math.ceil(Math.max(...ys));
      boxes += `M${x0}.5 ${y0}.5H${x1}.5V${y1}.5H${x0}.5Z`;
    }
  });
  return { byShade, boxes };
};
const DISTRICTS = buildDistricts();

const poly = (a: P[]) => 'M' + a.map(p => p.join(' ')).join('L') + 'Z';
const OUT = poly(OUTLINE);
const STATES = [
  'M263 328L275 328 285 333 295 336 303 337 302 355 303 373 291 376 292 395 289 412 285 425 288 445 300 460 297 470 284 484 288 500 290 520 289 545 298 556 300 562',
  'M227 437L240 445 258 454 278 453 290 450 300 462',
  'M315 383H344L346 362 353 355 372 354 374 338 386 334 386 330 398 334 415 330',
  'M315 383V415L330 414 345 417 364 420 366 435 372 445 364 455 345 459 338 456 333 440 325 437 308 438 300 444 314 455 317 470',
  'M286 425L300 416 315 415M372 445L377 462 376 475 379 492 386 487 400 478 413 479 423 488 430 496 423 510 445 512 446 530 440 545',
  'M377 462L389 454 412 451 418 440 426 436 437 442 455 436 465 436 478 445',
  'M234 503L255 504 268 518 279 530 281 545 289 545M184 594L200 586 220 582 240 572 245 562 255 565 272 572 267 583 272 600 282 612 285 625 283 640 290 660 300 680 320 678M300 562L325 568 336 573 345 571 355 580 375 585 378 600 388 606 400 610 409 614 430 605 452 600 458 590 459 560',
  'M181 630L192 633 196 645 195 652 205 665 215 665 218 656 236 661 242 680 265 683 280 688 300 695 315 700 320 692 340 694 345 700 355 699 357 680 365 665 367 655 385 660 396 672 408 671 411 690 405 710 402 725 412 738 410 760 404 780 385 783 360 798 345 795',
  'M338 585L332 612 345 625 348 640 362 645 370 655M378 600L382 585M409 614L421 607 427 612 425 635 440 630 455 626 478 629M422 697L440 685 450 680 465 680 478 680M411 715L418 720 411 735M355 700L365 710 380 705M312 700L318 715 313 725 320 735 318 747 325 752 340 738 352 745 362 755 372 757',
  'M432 335L432 350 430 370 434 392 424 412 422 432M430 345L448 340 470 345M590 349L600 344 610 340M742 336L738 350 744 360 736 370 734 385M493 365L500 372 512 371 520 380 530 385M634 350L634 372 643 385M583 350L588 360 612 368 622 371M630 375L640 372',
  'M424 432L435 425 450 427 462 434 472 430M398 595L402 615M318 715L330 742M335 752L350 758M460 600L470 640M290 450L300 462',
];

const ring = (x: number, y: number, x2: number, y2: number) => `M${x - 1}.5 ${y}.5H${x2 - 1}.5V${y2}.5H${x - 1}.5Z`;
const SELECTION = [
  ring(99, 226, 1000, 904), ring(157, 226, 1000, 859), ring(157, 224, 1000, 859), ring(170, 237, 1000, 275), ring(193, 248, 1000, 269),
  ring(170, 283, 876, 847), ring(178, 288, 873, 845), ring(179, 289, 870, 843), ring(185, 300, 221, 345),
  ring(261, 288, 415, 333), ring(263, 294, 408, 330), ring(225, 325, 420, 504), ring(227, 332, 300, 508), ring(233, 327, 373, 460), ring(419, 319, 543, 424),
  ring(433, 321, 508, 420), ring(580, 317, 738, 372), ring(692, 297, 869, 441), ring(763, 298, 842, 402), ring(181, 503, 372, 720),
  ring(600, 321, 672, 350), ring(657, 340, 745, 372), ring(508, 339, 634, 380), ring(181, 558, 320, 726), ring(181, 594, 440, 725),
  ring(274, 725, 402, 752), ring(281, 700, 420, 751), ring(311, 700, 440, 799), ring(334, 720, 500, 843), ring(343, 752, 500, 837), ring(363, 425, 480, 464), ring(289, 425, 440, 512),
  ring(478, 340, 869, 502), ring(478, 384, 869, 511), ring(478, 384, 808, 602), ring(478, 384, 816, 660), ring(798, 427, 829, 460), ring(835, 387, 854, 413),
  ring(290, 560, 480, 640), ring(311, 430, 400, 640), ring(410, 400, 460, 720), ring(381, 440, 540, 700),
  ring(889, 283, 1000, 455), ring(895, 302, 1000, 316), ring(894, 690, 1000, 847), ring(894, 841, 1000, 859),
  ring(180, 824, 284, 833), ring(222, 806, 242, 816), ring(273, 806, 315, 816),
].join('');

const Dashed = ({ d, o = 1 }: { d: string; o?: number }) => (
  <g fill="none" shapeRendering="crispEdges" opacity={o}>
    <path d={d} stroke="#e2e2e2" />
    <path d={d} stroke="#1414ae" strokeDasharray="5 3" />
  </g>
);
const LEGEND = ['<', '12', '22', '33', '43', '54', '>'];
const Label = styled.text<{ $s: number; $b?: boolean }>`
  font: ${p => (p.$b ? 700 : 400)} ${p => p.$s}px 'Noto Sans', sans-serif;
  letter-spacing: 0;
  fill: #0a0a0a;
`;
const MapSvg = styled.svg`
  display: block;
  flex: none;
`;
const HARROW = 'M-8 0l5-5v3H3V-5l5 5-5 5V2H-3V5z';

const MapView = () => (
  <MapSvg width="878" height="865" viewBox="54 137 878 865">
    <defs>
      <clipPath id="country"><path d={OUT} /></clipPath>
      <linearGradient id="gradBlue" x1="0" y1="0" x2="1" y2="1"><stop offset="0" stopColor="#0d8fdc" /><stop offset="1" stopColor="#d5ecfa" /></linearGradient>
      <linearGradient id="fall" x1="0" y1="0" x2="0" y2="1"><stop offset="0" stopColor="#000" stopOpacity=".4" /><stop offset="1" stopColor="#000" stopOpacity="0" /></linearGradient>
    </defs>
    <rect x="54" y="137" width="878" height="865" fill="#d1d1d1" />
    <rect x="156" y="226" width="800" height="634" fill="#fff" />
    <rect x="169" y="284" width="706" height="564" fill="#a5cde2" />
    <path d="M99 227H940V904H480V830L330 760 280 722 178 721 165 722 157 723 128 727 127 720 121 713 117 706 118 698 115 686H119V660L120 650 119 600V567L117 563 107 552 105 542 103 538V513L99 511V437L103 436 105 431 108 428 115 429 118 432 130 430 141 431 150 423 157 418 160 412 163 403 155 392 144 378 146 375 155 374 154 365 152 360 146 356 138 357 133 362 99 343Z" fill="#9d9d9d" stroke="#222" strokeWidth=".9" />
    <path d="M119 729L140 726 165 722 181 720" stroke="#222" fill="none" />
    <rect x="157" y="860" width="800" height="5" fill="url(#fall)" />
    <g fill="none" stroke="#2a2a2a" strokeWidth="1">
      <path d="M163 403L166 398 162 384 178 382 181 378 188 375 200 384 212 397 216 404 225 405 231 411M804 226L822 228 820 236 804 275 809 298M837 335H858L862 345 865 355 876 360 880 365 884 390 888 392" />
      <path d="M893 456L897 480 912 500 928 513 910 516 890 514 876 516 843 512 838 522 830 533 850 553 855 562 875 580 894 596 905 610 912 625 917 638 922 641 921 650 916 656 902 670 901 680 896 690 893 699 887 700 876 725 874 730 860 733 855 742 860 748 867 750 866 775 862 785 870 790 871 810 873 822 888 832 893 840 897 855 903 874 930 903M916 656H928L932 660" />
    </g>
    <rect x="169" y="237" width="800" height="39" fill="#1f78b4" />

    <path d={OUT} fill={RAMP[3]} />
    <g clipPath="url(#country)">
      {DISTRICTS.byShade.map((d, i) => <path key={i} d={d} fill={RAMP[i]} stroke="#3a2e24" strokeWidth=".75" />)}
      {LARGE.map(([c, d]) => <path key={d} d={d} fill={RAMP[c]} stroke="#3a2e24" strokeWidth=".9" strokeLinejoin="round" />)}
      {STATES.map((d, i) => <path key={i} d={d} fill="none" stroke="#1d1d1d" strokeWidth="2" strokeLinejoin="round" />)}
      <path d="M322 752l6 20 10 28 22 30 40 14 20-8-30-3-16-12-14-16-4-20-12-18-8-14z" fill="#1c1c1c" opacity=".75" />
      <Dashed d={DISTRICTS.boxes} o={0.66} />
    </g>
    <path d={OUT} fill="none" stroke="#1d1d1d" strokeWidth="2.600" strokeLinejoin="round" />

    <rect x="888" y="284" width="60" height="171" fill="#fff" />
    <Label $s={13} x="894" y="312">Preval</Label>
    {LEGEND.map((t, i) => (
      <g key={t}>
        <rect x="895" y={320 + i * 19.600} width="21" height="12" fill={RAMP[i]} stroke="#333" />
        <path d={`M894.500 ${319.500 + i * 19.600}h22v13h-22z`} fill="none" stroke="#1414ae" strokeDasharray="4 4" />
        <Label $s={12} x="921" y={331 + i * 19.600}>{t}</Label>
        <path d={`M921 ${Math.round(321 + i * 19.600)}.5h11M921 ${Math.round(331 + i * 19.600)}.5h11`} stroke="#1414ae" strokeDasharray="3 4" strokeWidth=".8" />
      </g>
    ))}
    <rect x="893" y="691" width="60" height="157" fill="#a5cde2" />
    <path d="M935 705L925 705 918 710 915 717 905 728 903 740 904 750 912 760 922 766 935 765Z" fill="#9d9d9d" stroke="#222" />
    <path d="M915 718l8 4 6-10 6-2M904 733l9-3V720M919 722l10 3 6 4M924 725l2 18-12 1-8-5M904 747l6-5 4 9 10-1 8 3M910 757l6-6M916 763l6-11 7 12" fill="none" stroke="#222" />

    <path d="M203 301L220 345 203 330Z" fill="#000" />
    <path d="M203 301L185 345 203 330Z" fill="#fff" />
    <path d="M202 303L186 344M202 308v22M199 312v20M196 320v16M193 326v13M190 333v9" stroke="#1414ae" strokeWidth="1.800" strokeDasharray="2.500 1.500" />

    <Dashed d={SELECTION} o={0.85} />
    <Label $s={21.500} $b x="191" y="265" textLength="741">Prevalence of residents living in poverty (i.e. &lt;$1.26 a day) in Nigeria (</Label>
    <Label $s={12} x="178" y="816">0</Label>
    <Label $s={12} x="221" y="816">100</Label>
    <Label $s={12} x="273" y="816" textLength="42">200 km</Label>
    <path d="M231.500 825v9M180 834h104" stroke="#111" />
    <g fill="#1e1e1e">
      <path d={HARROW} transform="translate(92.500 218.500) rotate(45) scale(.95)" />
      <path d={HARROW} transform="translate(576.500 215.500) rotate(90)" />
      <path d={HARROW} transform="translate(89.500 564.500)" />
      <path d={HARROW} transform="translate(92.500 910.500) rotate(-45) scale(.95)" />
    </g>
  </MapSvg>
);

const RulerSvg = styled.svg`
  flex: none;
  background: #353535;
`;
const RulerText = styled.text`
  font: 12px 'Open Sans', sans-serif;
  letter-spacing: 0;
  fill: #989898;
`;
const U = 7.5525;
const tickLen = (i: number, steps: number[]) => (i % 10 === 0 ? steps[0] : i % 5 === 0 ? steps[1] : steps[2]);
const HRuler = () => {
  let d = '';
  for (let i = -13; i < 103; i++) {
    const x = Math.floor(156.500 + i * U) + 0.5;
    if (x > 55) d += `M${x} 26v-${tickLen(i, [25, 13, 7])}`;
  }
  return (
    <RulerSvg width="878" height="26" viewBox="54 0 878 26">
      <path d={d} stroke="#a2a2a2" />
      {[-25, 0, 25, 50, 75, 100, 125, 150, 175, 200, 225, 250].map((v, i) => (
        <RulerText key={v} x={v < 0 ? 89 : 156.500 + (i - 1) * 75.525 + 3.500} y="14">{Math.abs(v)}</RulerText>
      ))}
      <path d="M473 21h9l-4.500 5z" fill="#999" />
    </RulerSvg>
  );
};
const VRuler = () => {
  let d = '';
  for (let i = -11; i < 103; i++) {
    const y = Math.floor(225 + i * U) + 0.5;
    if (y > 138) d += `M54 ${y}h-${tickLen(i, [18, 10, 5])}`;
  }
  return (
    <RulerSvg width="18" height="865" viewBox="36 137 18 865">
      <path d={d} stroke="#a2a2a2" />
      {[' 25', '0', '25', '50', '75', '100', '125', '150', '175', '200', '225', '2'].map((s, i) =>
        s.split('').map((c, k) => c !== ' ' && <RulerText key={i + '-' + k} x="40" y={239.500 + (i - 1) * 75.525 + k * 14.700}>{c}</RulerText>)
      )}
      <path d="M49 379v10l5-5z" fill="#999" />
    </RulerSvg>
  );
};

/* ---------- data ---------- */
const MENUS: [string, number][] = [['File', 40], ['Edit', 42], ['View', 48], ['Layer', 51], ['Object', 59.5], ['Path', 45], ['Text', 42], ['Filters', 55], ['Extensions', 85], ['Help', 40]];
const TOOLS = ['cursor', 'node', 'rect', 'ellipse', 'star', 'cube', 'spiral', 'pen', 'pencil', 'brush', 'A', 'gradient', 'mesh', 'dropper', 'bucket', 'tweak', 'spray', 'eraser', 'connector', 'measure', 'zoom', 'pages'];
const TOOL_BREAKS = [1, 6, 10, 14, 18];
const COMMANDS = ['newDoc', 'open', 'save', 'print', '-', 'imp', 'exp', '-', 'undo', 'redo', '-', 'copy', 'cut', 'paste', '-', 'zSel', 'zDraw', 'zPage', 'zCenter', '-', 'dup', 'clone', 'unlink', '-', 'group', 'ungroup', '-', 'fill', 'text'];
const ROWS = '38462 38460 38458 38456 38454 +38452 text38450 38448 38446 38444 +38442 path38440 38438 38436 38434 38432 38430 38428 +38426 text38424 38422 +38420 path38418 38416 +38414 text38412 38410 +38408 path38406 38404'.split(' ');
const ITEMS: { t: string; k?: string; i?: string; line?: boolean; on?: boolean; sub?: boolean; ls?: number }[] = [
  { t: 'Cut', k: 'Ctrl+X', i: 'cut' }, { t: 'Copy', k: 'Ctrl+C', i: 'copy' }, { t: 'Paste', k: 'Ctrl+V', i: 'paste', line: true },
  { t: 'Duplicate', k: 'Ctrl+D', i: 'dup' }, { t: 'Delete', i: 'trash', line: true },
  { t: 'Layers and Objects...', k: 'Shift+Ctrl+L', i: 'layers', ls: -0.08 }, { t: 'Object Properties...', k: 'Shift+Ctrl+O', i: 'props', ls: -0.03 }, { t: 'Fill and Stroke...', k: 'Shift+Ctrl+F', i: 'fill', line: true, ls: -0.03 },
  { t: 'Select Same', sub: true, line: true, ls: 0.27 },
  { t: 'Move to Layer...', ls: 0 }, { t: 'Create anchor (hyperlink)', ls: 0.03 }, { t: 'Group', k: 'Ctrl+G', on: true, ls: 0 }, { t: 'Ungroup', k: 'Shift+Ctrl+G', ls: 0.05 }, { t: 'Enter group #g33314', ls: 0.12 }, { t: 'Group to Layer', line: true, ls: 0.05 },
  { t: 'Set Clip', ls: 0.25 }, { t: 'Set Clip Group', ls: 0.17 }, { t: 'Set Mask', line: true, ls: 0.12 },
  { t: 'Hide Selected Objects', ls: 0.25 }, { t: 'Lock Selected Objects', ls: 0.2 },
];
const PALETTE = '000000 1a1a1a 333333 4d4d4d 666666 808080 999999 b3b3b3 cccccc e6e6e6 ececec f2f2f2 f9f9f9 ffffff 800000 ff0000 808000 ffff00 008000 00ff00 008080 00ffff 000080 0000ff 800080 ff00ff 2b0000 550000 800000 aa0000 d40000 ff0000 ff2a2a ff5555 ff8080 ffaaaa ffd5d5 280b0b 501616 782121 a02c2c c83737 d35f5f de8787 e9afaf f4d7d7 241c1c 483737 6c5353 916f6f ac9393 c8b7b7 e3dbdb 2b1100 552200 803300 aa4400 d45500 ff6600 ff7f2a ff9955 ffb380 ffccaa ffe6d5 28170b 502d16 784421'.split(' ');

const Spin = ({ v, w }: { v: string; w: number }) => (
  <SpinBox $w={w}><b>{v}</b><i><Ico n="minus" s={15} /></i><i><Ico n="plus" s={15} /></i></SpinBox>
);
const ToolLetter = styled.span`
  font: 700 16px 'Open Sans', sans-serif;
  letter-spacing: 0;
  border-right: 2px solid ${GR};
  line-height: 16px;
  padding-right: 3px;
`;

export default function App() {
  return (
    <Window>
      <Global />
      <TitleBar>
        <Ico n="ink" s={19} />
        <Title>*Prevalence of poverty in Nigeria (2014) NB v1.svg - Inkscape</Title>
        <WinBtn><svg width="12" height="12"><path d="M0 5.500h12" stroke="#000" /></svg></WinBtn>
        <WinBtn><svg width="12" height="12"><rect x=".6" y=".6" width="10.800" height="10.800" rx="1" fill="none" stroke="#000" strokeWidth="1.200" /></svg></WinBtn>
        <WinBtn><svg width="12" height="12"><path d="M0 0l12 12M12 0L0 12" stroke="#000" strokeWidth="1.200" /></svg></WinBtn>
      </TitleBar>
      <MenuBar>{MENUS.map(([t, w]) => <MenuName key={t} $w={w}>{t}</MenuName>)}</MenuBar>
      <ToolRow>
        {['selAll', 'selLayers', 'desel', 'resize'].map(n => <TopBtn key={n}><Ico n={n} /></TopBtn>)}
        <VSep />
        {['rotL', 'rotR', 'flipH', 'flipV'].map(n => <TopBtn key={n}><Ico n={n} /></TopBtn>)}
        <VSep />
        {['top', 'raise', 'lower', 'bottom'].map(n => <TopBtn key={n}><Ico n={n} /></TopBtn>)}
        <VSep />
        <SpinLabel $w={20}>X:</SpinLabel><Spin v="-18.917" w={132} />
        <SpinLabel $w={21}>Y:</SpinLabel><Spin v="-0.169" w={132} />
        <SpinLabel $w={27}>W:</SpinLabel><Spin v="316.023" w={126} />
        <TopBtn $w={47}><Ico n="unlock" /></TopBtn>
        <Spacer />
        <TopBtn $w={42}><Ico n="down" s={15} /></TopBtn>
        <TopBtn $w={41}><Ico n="snap" s={17} /></TopBtn>
        <TopBtn $w={36} $boxed><Ico n="left" /></TopBtn>
      </ToolRow>
      <Main>
        <LeftBar>
          {TOOLS.map((n, i) => (
            <ToolBtn key={n} $on={i === 0} $line={TOOL_BREAKS.includes(i)}>{n === 'A' ? <ToolLetter>A</ToolLetter> : <Ico n={n} />}</ToolBtn>
          ))}
        </LeftBar>
        <Frame>
          <FrameRow $h={27}><Corner><Ico n="lock" /></Corner><HRuler /><Corner><Ico n="zOne" /></Corner></FrameRow>
          <FrameRow $h={865}><VRuler /><MapView /><VScroll><Thumb $w={8} $h={415} /></VScroll></FrameRow>
          <FrameRow $h={27}><HScroll><Thumb $w={344} $h={8} /></HScroll><Corner><Ico n="cms" s={17} /></Corner></FrameRow>
        </Frame>
        <Splitter><svg width="4" height="14"><path d="M.5 0h3v3h-3zM.5 5h3v3h-3zM.5 10h3v3h-3z" fill={W} /></svg></Splitter>
        <Panel>
          <Tabs>
            <Tab><Ico n="layers" />Layers and Objects<Ico n="close" /></Tab>
            <TabMenu><Ico n="chevDim" /></TabMenu>
          </Tabs>
          <PanelTools>
            <PBtn $w={36}><Ico n="addLayer" s={15} /></PBtn>
            <PBtn $w={37}><Ico n="plusLayer" s={15} /></PBtn>
            <PBtn $w={52} />
            <PBtn $w={37}><Ico n="up" /></PBtn>
            <PBtn $w={36}><Ico n="chev" /></PBtn>
            <PBtn $w={36}><Ico n="trash" s={15} /></PBtn>
          </PanelTools>
          <ListArea>
            <List>
              <Row $kind="root"><div><Slot $w={17} $lift={0}><Ico n="tri" s={14} /></Slot><Slot $w={23}><Ico n="file" /></Slot><RowName $gap={6}>Everything else</RowName></div><u /></Row>
              {ROWS.map(r => {
                const open = r[0] === '+';
                const leaf = /^[tp]/.test(r);
                return (
                  <Row key={r} $kind={leaf ? 'leaf' : 'g'}>
                    <div>
                      <Slot $w={leaf ? 0 : 35} $lift={0}>{open && <Ico n="tri" s={14} />}</Slot>
                      <Slot $w={leaf ? 76 : 23}><Ico n={leaf ? (r[0] === 't' ? 'tObj' : 'pObj') : 'folder'} /></Slot>
                      <RowName $gap={6}>{leaf ? r : 'g' + r.replace('+', '')}</RowName>
                    </div>
                    <u />
                  </Row>
                );
              })}
            </List>
            <ListScroll><Thumb $w={8} $h={40} /></ListScroll>
          </ListArea>
        </Panel>
        <RightBar>
          {COMMANDS.map((n, i) => (n === '-' ? <CmdSep key={i} /> : <CmdBtn key={i}><Ico n={n} /></CmdBtn>))}
          <CmdBtn $h={50}><Ico n="right" s={15} /></CmdBtn>
        </RightBar>
      </Main>
      <PaletteRow>
        <Swatch $c="#fff"><svg width="16" height="16"><path d="M0 0l16 16M16 0L0 16" stroke="#8a1010" strokeWidth="1.500" /></svg></Swatch>
        {PALETTE.map((c, i) => <Swatch key={i} $c={'#' + c} />)}
        <NavBtn $w={41}><Ico n="up" /></NavBtn>
        <NavBtn $w={21}><Ico n="chev" /></NavBtn>
        <NavBtn $w={6} />
        <Corner $h={27}><Ico n="burger" s={15} /></Corner>
      </PaletteRow>
      <Status>
        <Stack $w={46} $right><span>Fill:</span><span>Stroke:</span></Stack>
        <Stack $w={45} $right><span>≠</span><span>≠</span></Stack>
        <Stack $w={62} $right><span>&nbsp;</span><span>0.385</span></Stack>
        <SpinLabel $w={20}>O:</SpinLabel>
        <SpinBox $w={72} $h={41}><b>100</b><i><Ico n="minus" s={14} /></i><i><Ico n="plusDim" s={14} /></i></SpinBox>
        <LayerMark />
        <LayerName>Everything else</LayerName>
        <Cell $w={54}><Ico n="eye" /></Cell>
        <Cell $w={20}><Ico n="unlock" /></Cell>
        <Stack $w={466} $gap={16} $ls={0.21}><span><b>955</b> objects selected of type <b>Group</b> in layer <b>Everything else</b>. Click</span><span>selection again to toggle scale/rotation handles.</span></Stack>
        <Stack $w={20}><span>X:</span><span>Y:</span></Stack>
        <Stack $w={49} $right><span>106.26</span><span>52.63</span></Stack>
        <SpinLabel $w={24}>Z:</SpinLabel>
        <SpinBox $w={98} $h={41} $cell={21} $pad={11} $end={2}><b>80%</b><i><Ico n="minus" s={15} /></i><i><Ico n="plus" s={15} /></i></SpinBox>
        <SpinLabel $w={24}>R:</SpinLabel>
        <SpinBox $w={107} $h={41} $cell={24} $pad={14} $end={1}><b>0.00°</b><i><Ico n="minus" s={15} /></i><i><Ico n="plus" s={15} /></i></SpinBox>
      </Status>

      <Popup>
        {ITEMS.map(m => (
          <Item key={m.t} $icon={!!m.i} $line={m.line} $on={m.on} $ls={m.ls ?? 0.15}>
            {m.i && <Ico n={m.i} />}{m.t}
            {m.k && <em>{m.k}</em>}
            {m.sub && <em><Ico n="right" s={17} /></em>}
          </Item>
        ))}
      </Popup>
      <Mark $x={473} $y={534} $w={194} $h={36} />
      <Mark $x={493} $y={740} $w={88} $h={34} />
      <Mark $x={964} $y={158} $w={34} $h={34} />
      <Mark $x={1002} $y={158} $w={32} $h={31} />
      <Mark $x={960} $y={188} $w={161} $h={35} />
    </Window>
  );
}
